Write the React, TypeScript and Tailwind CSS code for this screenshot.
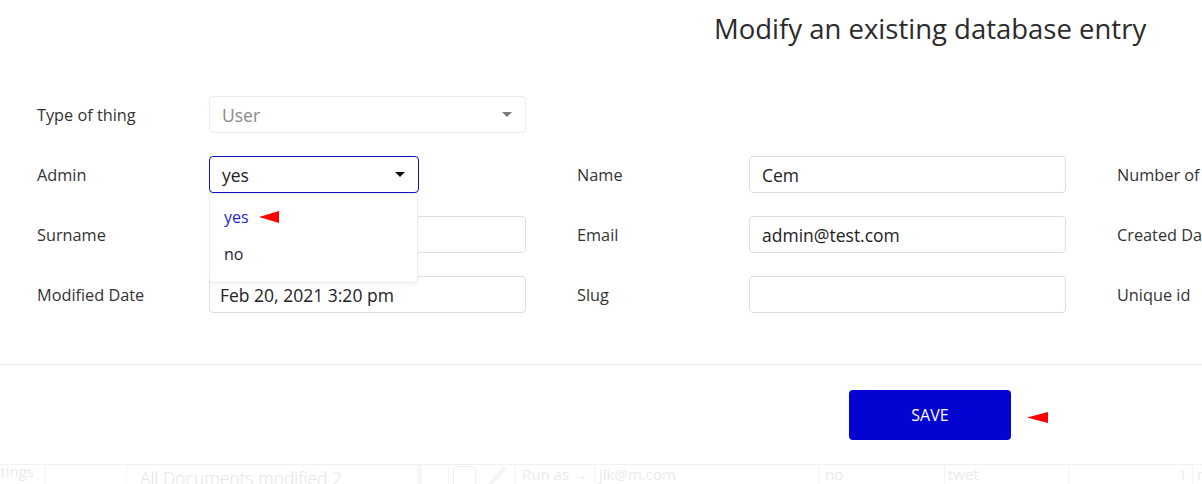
import React from "react";

const LABEL = "w-[172px] shrink-0 text-[16.3px] leading-[22px] text-[#333333]";
const INPUT =
  "box-border flex h-[37px] w-[317px] shrink-0 items-center rounded-[4px] border border-[#dedede] bg-white px-[12px] text-[17.5px] leading-[24px] text-[#222222]";

function Field({ label, children }: { label: string; children?: React.ReactNode }) {
  return (
    <div className="flex w-[540px] shrink-0 items-center">
      <div className={LABEL}>{label}</div>
      {children}
    </div>
  );
}

function Caret({ color }: { color: string }) {
  return (
    <svg width="10" height="5" viewBox="0 0 10 5" className="shrink-0">
      <path d="M0 0h10L5 5z" fill={color} />
    </svg>
  );
}

function RedArrow() {
  return (
    <svg width="20" height="12" viewBox="0 0 20 12" className="shrink-0">
      <path d="M0 6 20 0v12z" fill="#ff0000" />
    </svg>
  );
}

export default function App() {
  return (
    <div className="relative box-border h-[484px] w-[1202px] overflow-hidden bg-white font-['Open_Sans',sans-serif]">
      {/* Title */}
      <div className="pl-[714px] pt-[11px]">
        <h1 className="whitespace-nowrap text-[27.5px] font-normal leading-[36px] text-[#2b2b2b]">
          Modify an existing database entry
        </h1>
      </div>

      {/* Form */}
      <div className="mt-[49px] flex flex-col gap-[23px] pl-[37px]">
        <div className="flex">
          <Field label="Type of thing">
            <div className="box-border flex h-[37px] w-[317px] shrink-0 items-center justify-between rounded-[4px] border border-[#ececec] bg-white pl-[12px] pr-[13px] text-[17.5px] leading-[24px] text-[#8a8a8a]">
              <span>User</span>
              <Caret color="#7a7a7a" />
            </div>
          </Field>
        </div>

        <div className="flex">
          <Field label="Admin">
            <div className="relative w-[317px] shrink-0">
              <div className="box-border flex h-[37px] w-[210px] items-center justify-between rounded-[4px] border border-[#1212c8] bg-white pl-[12px] pr-[13px] text-[17.5px] leading-[24px] text-[#222222]">
                <span>yes</span>
                <Caret color="#111111" />
              </div>
              <div className="absolute left-0 top-[37px] z-10 box-border w-[209px] rounded-b-[4px] border border-[#ececec] bg-white pb-[10px] pt-[4px] shadow-[0_2px_4px_rgba(0,0,0,0.04)]">
                <div className="flex h-[37px] items-center gap-[10px] pl-[14px] text-[16px] text-[#2424d4]">
                  <span>yes</span>
                  <RedArrow />
                </div>
                <div className="flex h-[37px] items-center pl-[14px] text-[16px] text-[#1c1c3c]">no</div>
              </div>
            </div>
          </Field>
          <Field label="Name">
            <div className={INPUT}>Cem</div>
          </Field>
          <Field label="Number of items">
            <div className={INPUT}></div>
          </Field>
        </div>

        <div className="flex">
          <Field label="Surname">
            <div className={INPUT}></div>
          </Field>
          <Field label="Email">
            <div className={INPUT}>admin@test.com</div>
          </Field>
          <Field label="Created Date">
            <div className={INPUT}></div>
          </Field>
        </div>

        <div className="flex">
          <Field label="Modified Date">
            <div className="box-border flex h-[37px] w-[317px] shrink-0 items-center rounded-[4px] border border-[#dedede] bg-white px-[10px] text-[17.5px] leading-[24px] text-[#222222]">
              Feb 20, 2021 3:20 pm
            </div>
          </Field>
          <Field label="Slug">
            <div className={INPUT}></div>
          </Field>
          <Field label="Unique id">
            <div className={INPUT}></div>
          </Field>
        </div>
      </div>

      {/* Footer */}
      <div className="mt-[51px] flex items-center justify-end border-t border-[#efefef] pb-[24px] pr-[154px] pt-[25px]">
        <button className="flex h-[50px] w-[162px] items-center justify-center rounded-[4px] bg-[#0404d2] text-[16px] font-medium text-white">
          SAVE
        </button>
        <div className="ml-[16px] mt-[4px] flex">
          <svg width="21" height="11" viewBox="0 0 21 11">
            <path d="M0 5.5 21 0v11z" fill="#ff0000" />
          </svg>
        </div>
      </div>

      {/* Faded background table strip */}
      <div className="flex h-[40px] border-t border-[#f1f1f1] text-[15px] text-[#ebebeb]">
        <div className="flex w-[45px] shrink-0 justify-end overflow-hidden whitespace-nowrap pr-[11px] leading-[12px]">
          <span className="shrink-0">Settings</span>
        </div>
        <div className="w-[81px] shrink-0 border-l border-[#f4f4f4]"></div>
        <div className="w-[291px] shrink-0 border-l border-[#f4f4f4] pl-[13px] pt-[1px] text-[17.5px] font-light leading-[24px] text-[#e4e4e4]">
          All Documents modified 2
        </div>
        <div className="w-[31px] shrink-0 pl-0">
          <div className="h-[40px] w-[5px] bg-[#f6f6f6]"></div>
        </div>
        <div className="flex w-[67px] shrink-0 items-start gap-[12px] border-l border-[#f4f4f4] pl-[4px] pt-[1px]">
          <div className="h-[22px] w-[23px] rounded-[4px] border border-[#f0f0f0]"></div>
          <svg width="20" height="20" viewBox="0 0 20 20">
            <path d="M3 17 16 3" stroke="#f4f4f4" strokeWidth="4" strokeLinecap="round" />
          </svg>
        </div>
        <div className="w-[79px] shrink-0 border-l border-[#f4f4f4] pl-[6px] leading-[18px]">Run as →</div>
        <div className="w-[224px] shrink-0 border-l border-[#f4f4f4] pl-[4px] leading-[18px]">jlk@m.com</div>
        <div className="w-[126px] shrink-0 border-l border-[#f4f4f4] pl-[6px] leading-[18px]">no</div>
        <div className="w-[124px] shrink-0 border-l border-[#f4f4f4] pl-[3px] leading-[18px]">twet</div>
        <div className="w-[124px] shrink-0 border-l border-[#f4f4f4] pr-[5px] text-right leading-[18px]">1</div>
        <div className="w-[40px] shrink-0 border-l border-[#f4f4f4] pl-[4px] leading-[18px]">no</div>
      </div>
    </div>
  );
}
